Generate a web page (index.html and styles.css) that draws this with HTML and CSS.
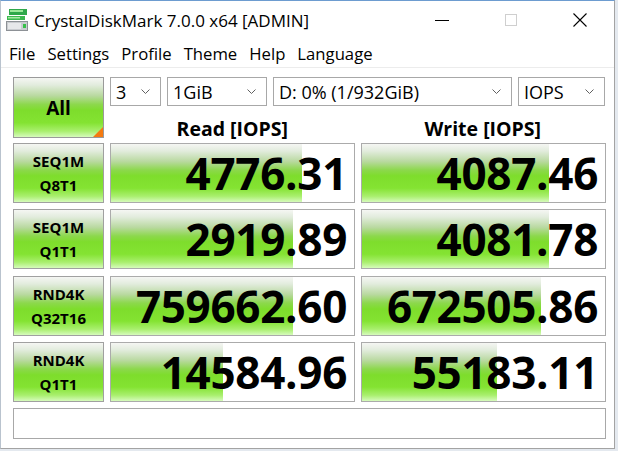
FILE: index.html
```html
<!DOCTYPE html>
<html>
<head>
<meta charset="utf-8">
<title>CrystalDiskMark</title>
<link rel="stylesheet" href="styles.css">
</head>
<body>
<div class="window">
  <div class="titlebar">
    <svg class="app-icon" width="24" height="24" viewBox="0 0 24 24">
      <rect x="4" y="1" width="18" height="6" fill="#2fa84a"/>
      <rect x="5" y="2" width="13" height="2" fill="#9be89a"/>
      <rect x="2" y="8" width="18" height="4" fill="#3cb84f"/>
      <rect x="3" y="9" width="12" height="1.5" fill="#a5eaa3"/>
      <rect x="1" y="13" width="22" height="10" fill="#8d9196"/>
      <rect x="2" y="14" width="20" height="8" fill="#c9ccd0"/>
      <rect x="3" y="15" width="13" height="6" fill="#e6e8ea"/>
      <rect x="18" y="16" width="3" height="4" fill="#37c04a"/>
    </svg>
    <span class="title">CrystalDiskMark 7.0.0 x64 [ADMIN]</span>
    <div class="controls">
      <div class="ctl"><svg width="14" height="14" viewBox="0 0 14 14"><line x1="0" y1="7.5" x2="14" y2="7.5" stroke="#000" stroke-width="1"/></svg></div>
      <div class="ctl"><svg width="12" height="12" viewBox="0 0 12 12"><rect x="0.5" y="0.5" width="11" height="11" fill="none" stroke="#cfcfcf" stroke-width="1"/></svg></div>
      <div class="ctl"><svg width="14" height="14" viewBox="0 0 14 14"><path d="M0.5 0.5 L13.5 13.5 M13.5 0.5 L0.5 13.5" stroke="#000" stroke-width="1.1" fill="none"/></svg></div>
    </div>
  </div>
  <div class="menubar">
    <span class="menu-item">File</span>
    <span class="menu-item">Settings</span>
    <span class="menu-item">Profile</span>
    <span class="menu-item">Theme</span>
    <span class="menu-item">Help</span>
    <span class="menu-item">Language</span>
  </div>
  <div class="content">
    <div class="top">
      <div class="all-btn green">All<span class="corner"></span></div>
      <div class="top-right">
        <div class="combos">
          <div class="combo c-count"><span>3</span><svg class="chev" width="9" height="5" viewBox="0 0 9 5"><path d="M0.5 0.5 L4.5 4.5 L8.5 0.5" stroke="#606060" fill="none"/></svg></div>
          <div class="combo c-size"><span>1GiB</span><svg class="chev" width="9" height="5" viewBox="0 0 9 5"><path d="M0.5 0.5 L4.5 4.5 L8.5 0.5" stroke="#606060" fill="none"/></svg></div>
          <div class="combo c-drive"><span>D: 0% (1/932GiB)</span><svg class="chev" width="9" height="5" viewBox="0 0 9 5"><path d="M0.5 0.5 L4.5 4.5 L8.5 0.5" stroke="#606060" fill="none"/></svg></div>
          <div class="combo c-unit"><span>IOPS</span><svg class="chev" width="9" height="5" viewBox="0 0 9 5"><path d="M0.5 0.5 L4.5 4.5 L8.5 0.5" stroke="#606060" fill="none"/></svg></div>
        </div>
        <div class="headers">
          <div class="head">Read [IOPS]</div>
          <div class="head">Write [IOPS]</div>
        </div>
      </div>
    </div>
    <div class="results">
      <div class="label green"><span>SEQ1M</span><span>Q8T1</span></div>
      <div class="value"><div class="bar green" style="width:191px"></div><span class="num">4776.31</span></div>
      <div class="value"><div class="bar green" style="width:187px"></div><span class="num">4087.46</span></div>

      <div class="label green"><span>SEQ1M</span><span>Q1T1</span></div>
      <div class="value"><div class="bar green" style="width:182px"></div><span class="num">2919.89</span></div>
      <div class="value"><div class="bar green" style="width:187px"></div><span class="num">4081.78</span></div>

      <div class="label green"><span>RND4K</span><span>Q32T16</span></div>
      <div class="value"><div class="bar green" style="width:182px"></div><span class="num">759662.60</span></div>
      <div class="value"><div class="bar green" style="width:179px"></div><span class="num">672505.86</span></div>

      <div class="label green"><span>RND4K</span><span>Q1T1</span></div>
      <div class="value"><div class="bar green" style="width:112px"></div><span class="num">14584.96</span></div>
      <div class="value"><div class="bar green" style="width:135px"></div><span class="num">55183.11</span></div>
    </div>
    <div class="comment"></div>
  </div>
</div>
</body>
</html>
```
FILE: styles.css
```css
* { box-sizing: border-box; }
html, body { margin: 0; padding: 0; }
body {
  width: 618px;
  height: 451px;
  background: #e4e9ef;
  font-family: "Open Sans", "Noto Sans", sans-serif;
  color: #000;
  overflow: hidden;
}
.window {
  width: 615px;
  height: 449px;
  background: #fff;
  border: 1px solid;
  border-color: #6d9cd0 #a3a3a3 #a3a3a3 #b9c3ce;
  display: flex;
  flex-direction: column;
}
.titlebar {
  height: 38px;
  display: flex;
  align-items: center;
}
.app-icon { margin-left: 4px; flex: none; }
.title {
  margin-left: 5px;
  font-size: 17px;
  white-space: nowrap;
}
.controls {
  margin-left: auto;
  display: flex;
  height: 38px;
}
.ctl {
  width: 69px;
  height: 38px;
  display: flex;
  align-items: center;
  justify-content: center;
}
.menubar {
  height: 29px;
  display: flex;
  align-items: center;
  padding-left: 2px;
  border-bottom: 1px solid #ececec;
  font-size: 16.7px;
}
.menu-item { padding: 0 6px; white-space: nowrap; }
.content {
  padding: 9px 8px 0 12px;
  display: flex;
  flex-direction: column;
}
.green {
  background: linear-gradient(to bottom,
    #f5f6f3 0%, #e2ecdd 12%, #b9d9a0 30%, #8cd84c 45%,
    #7edd2c 55%, #84e332 76%, #a9ef6e 90%, #d6fbbc 100%);
}
.top { display: flex; gap: 6px; height: 61px; }
.all-btn {
  position: relative;
  width: 91px;
  height: 61px;
  border: 1px solid #9a9a9a;
  display: flex;
  align-items: center;
  justify-content: center;
  font-weight: 700;
  font-size: 19px;
}
.corner {
  position: absolute;
  right: 0;
  bottom: 0;
  width: 0;
  height: 0;
  border-style: solid;
  border-width: 0 0 10px 10px;
  border-color: transparent transparent #f57a10 transparent;
}
.top-right { width: 495px; display: flex; flex-direction: column; }
.combos { display: flex; gap: 6px; height: 29px; }
.combo {
  height: 29px;
  border: 1px solid #a8a8a8;
  display: flex;
  align-items: center;
  padding: 0 10px 0 5px;
  font-size: 18px;
  white-space: nowrap;
  background: #fff;
}
.combo .chev { margin-left: auto; flex: none; }
.c-count { width: 51px; }
.c-size { width: 100px; }
.c-drive { width: 239px; }
.c-unit { width: 87px; }
.headers { display: flex; gap: 6px; padding-top: 12px; }
.head {
  width: 245px;
  text-align: center;
  font-weight: 700;
  font-size: 19.5px;
  line-height: 22px;
}
.results {
  margin-top: 5px;
  display: grid;
  grid-template-columns: 91px 245px 245px;
  grid-auto-rows: 60px;
  column-gap: 6px;
  row-gap: 6.3px;
}
.label {
  border: 1px solid #a0a0a0;
  display: flex;
  flex-direction: column;
  align-items: center;
  justify-content: center;
  font-weight: 700;
  font-size: 15px;
  line-height: 24px;
}
.value {
  position: relative;
  border: 1px solid #ababab;
  background: #fff;
  display: flex;
  align-items: center;
  justify-content: flex-end;
  padding-right: 7px;
  overflow: hidden;
}
.bar {
  position: absolute;
  left: 0;
  top: 0;
  bottom: 0;
}
.num {
  position: relative;
  font-weight: 700;
  font-size: 44px;
  line-height: 58px;
  letter-spacing: -0.3px;
}
.comment {
  margin-top: 6px;
  height: 31px;
  border: 1px solid #a8a8a8;
  background: #fff;
}
```
